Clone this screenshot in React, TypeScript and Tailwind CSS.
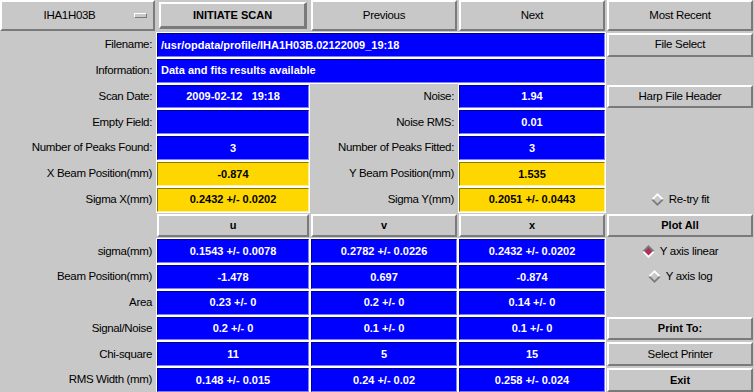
import React from "react";

const font = { fontFamily: '"Liberation Sans", Arial, sans-serif' };

function Btn({ children, bold }: { children?: React.ReactNode; bold?: boolean }) {
  return (
    <div
      className={`flex items-center justify-center border-2 border-t-white border-l-white border-r-[#7a7a7a] border-b-[#7a7a7a] bg-[#c8c8c8] text-black ${
        bold ? "font-bold text-[11px]" : "text-[11.5px] tracking-[-0.3px]"
      }`}
    >
      {children}
    </div>
  );
}

function Label({ children }: { children?: React.ReactNode }) {
  return (
    <div className="flex items-center justify-end pr-[3px] text-[11.5px] tracking-[-0.35px] text-black whitespace-nowrap">
      {children}
    </div>
  );
}

function Field({
  children,
  yellow,
  left,
  span,
}: {
  children?: React.ReactNode;
  yellow?: boolean;
  left?: boolean;
  span?: boolean;
}) {
  const color = yellow
    ? "bg-[#ffd700] text-black border-t-[#8c7800] border-l-[#8c7800] border-r-[#fff0a0] border-b-[#fff0a0]"
    : "bg-[#0000ff] text-white border-t-[#00008c] border-l-[#00008c] border-r-[#8080ff] border-b-[#8080ff]";
  return (
    <div
      className={`flex items-center border outline outline-1 outline-white text-[11px] font-bold whitespace-pre ${color} ${
        left ? "justify-start pl-[3px]" : "justify-center"
      } ${span ? "col-span-3" : ""}`}
    >
      {children}
    </div>
  );
}

function Diamond({ on }: { on?: boolean }) {
  return (
    <svg width="13" height="13" viewBox="0 0 13 13" className="shrink-0">
      <polygon points="0,6.5 6.5,0 13,6.5" fill={on ? "#7a7a7a" : "#ffffff"} />
      <polygon points="0,6.5 6.5,13 13,6.5" fill={on ? "#ffffff" : "#7a7a7a"} />
      <polygon points="2.5,6.5 6.5,2.5 10.5,6.5 6.5,10.5" fill={on ? "#b0305c" : "#c8c8c8"} />
    </svg>
  );
}

function Radio({ on, children }: { on?: boolean; children: React.ReactNode }) {
  return (
    <div className="flex items-center justify-center gap-[5px] text-[11.5px] tracking-[-0.3px] text-black">
      <Diamond on={on} />
      <span>{children}</span>
    </div>
  );
}

const tableRows: [string, string, string, string][] = [
  ["sigma(mm)", "0.1543 +/- 0.0078", "0.2782 +/- 0.0226", "0.2432 +/- 0.0202"],
  ["Beam Position(mm)", "-1.478", "0.697", "-0.874"],
  ["Area", "0.23 +/- 0", "0.2 +/- 0", "0.14 +/- 0"],
  ["Signal/Noise", "0.2 +/- 0", "0.1 +/- 0", "0.1 +/- 0"],
  ["Chi-square", "11", "5", "15"],
  ["RMS Width (mm)", "0.148 +/- 0.015", "0.24 +/- 0.02", "0.258 +/- 0.024"],
];

const sideItems: React.ReactNode[] = [
  <Radio on key="lin">Y axis linear</Radio>,
  <Radio key="log">Y axis log</Radio>,
  <div key="e" />,
  <Btn bold key="p">Print To:</Btn>,
  <Btn key="s">Select Printer</Btn>,
  <Btn bold key="x">Exit</Btn>,
];

export default function App() {
  return (
    <div className="w-[754px] h-[392px] bg-[#c8c8c8] overflow-hidden" style={font}>
      <div className="grid grid-cols-[155px_152px_146px_146px_146px] grid-rows-[31px_repeat(14,1fr)] gap-[2px] h-[392px]">
        {/* top bar */}
        <div className="relative flex items-center justify-center border-2 border-t-white border-l-white border-r-[#7a7a7a] border-b-[#7a7a7a] text-[11.5px] tracking-[-0.3px]">
          <span className="mr-[16px]">IHA1H03B</span>
          <div className="absolute right-[6px] top-[11px] w-[13px] h-[5px] border border-t-white border-l-white border-r-[#7a7a7a] border-b-[#7a7a7a]" />
        </div>
        <div className="p-[2px]">
          <div className="h-full flex items-center justify-center border-t-2 border-l-2 border-r-[3px] border-b-[3px] border-t-white border-l-white border-r-[#7a7a7a] border-b-[#7a7a7a] text-[11px] font-bold">
            INITIATE SCAN
          </div>
        </div>
        <Btn>Previous</Btn>
        <Btn>Next</Btn>
        <Btn>Most Recent</Btn>

        <Label>Filename:</Label>
        <Field left span>/usr/opdata/profile/IHA1H03B.02122009_19:18</Field>
        <Btn>File Select</Btn>

        <Label>Information:</Label>
        <Field left span>Data and fits results available</Field>
        <div />

        <Label>Scan Date:</Label>
        <Field>{"2009-02-12   19:18"}</Field>
        <Label>Noise:</Label>
        <Field>1.94</Field>
        <Btn>Harp File Header</Btn>

        <Label>Empty Field:</Label>
        <Field />
        <Label>Noise RMS:</Label>
        <Field>0.01</Field>
        <div />

        <Label>Number of Peaks Found:</Label>
        <Field>3</Field>
        <Label>Number of Peaks Fitted:</Label>
        <Field>3</Field>
        <div />

        <Label>X Beam Position(mm)</Label>
        <Field yellow>-0.874</Field>
        <Label>Y Beam Position(mm)</Label>
        <Field yellow>1.535</Field>
        <div />

        <Label>Sigma X(mm)</Label>
        <Field yellow>0.2432 +/- 0.0202</Field>
        <Label>Sigma Y(mm)</Label>
        <Field yellow>0.2051 +/- 0.0443</Field>
        <Radio>Re-try fit</Radio>

        <div />
        <Btn bold>u</Btn>
        <Btn bold>v</Btn>
        <Btn bold>x</Btn>
        <Btn bold>Plot All</Btn>

        {tableRows.map((r, i) => (
          <React.Fragment key={r[0]}>
            <Label>{r[0]}</Label>
            <Field>{r[1]}</Field>
            <Field>{r[2]}</Field>
            <Field>{r[3]}</Field>
            {sideItems[i]}
          </React.Fragment>
        ))}
      </div>
    </div>
  );
}
